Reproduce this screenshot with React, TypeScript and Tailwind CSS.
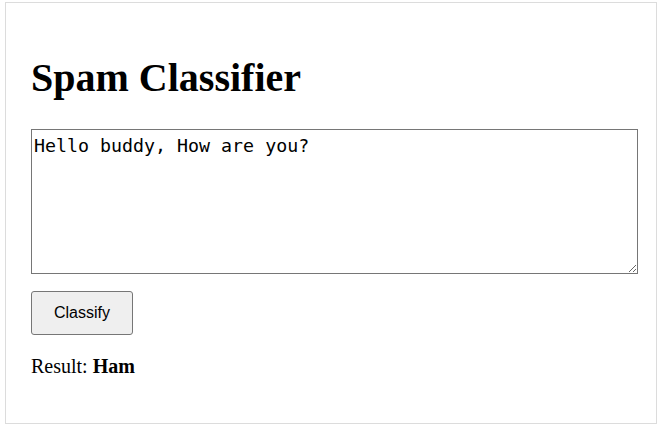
import React from "react";

export default function App() {
  return (
    <div className="w-[665px] h-[432px] bg-white pt-[2px] pl-[5px]">
      <div className="w-[652px] h-[422px] border border-[#dcdcdc] px-[25px] pt-[52px] flex flex-col items-start">
        <h1 className="text-[40px] leading-[46px] font-bold text-black font-['Liberation_Serif','Times_New_Roman',serif]">
          Spam Classifier
        </h1>
        <textarea
          className="mt-[28px] w-[607px] h-[145px] border border-[#767676] p-[2px] text-[18.3px] text-black bg-white outline-none resize font-['DejaVu_Sans_Mono',monospace]"
          defaultValue="Hello buddy, How are you?"
        />
        <button className="mt-[17px] w-[102px] h-[44px] bg-[#efefef] border border-[#767676] rounded-[3px] text-[16px] text-black flex items-center justify-center font-['Liberation_Sans',Arial,sans-serif]">
          Classify
        </button>
        <p className="mt-[20px] text-[20px] leading-[23px] text-black font-['Liberation_Serif','Times_New_Roman',serif]">
          Result: <strong className="font-bold">Ham</strong>
        </p>
      </div>
    </div>
  );
}
